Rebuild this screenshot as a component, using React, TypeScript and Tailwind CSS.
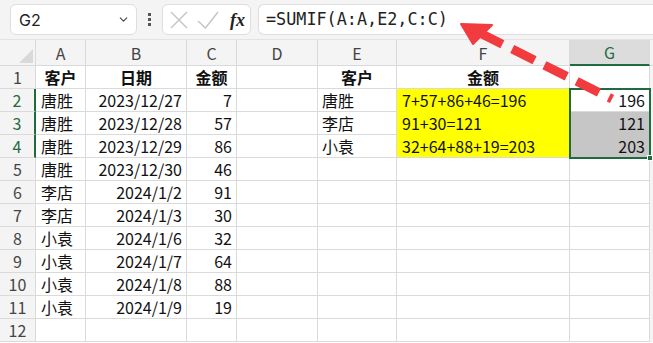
import React from "react";
import { ChevronDown } from "lucide-react";

const COLS = ["A", "B", "C", "D", "E", "F", "G"];
const WIDTHS = ["w-[50px]", "w-[101px]", "w-[50px]", "w-[81px]", "w-[79px]", "w-[173px]", "w-[80px]"];
const ALIGN = ["text-left pl-[5px]", "text-right pr-[4px]", "text-right pr-[4px]", "", "text-left pl-[4px]", "text-left pl-[5px]", "text-right pr-[4px]"];

const rows: string[][] = [
  ["客户", "日期", "金额", "", "客户", "金额", ""],
  ["唐胜", "2023/12/27", "7", "", "唐胜", "7+57+86+46=196", "196"],
  ["唐胜", "2023/12/28", "57", "", "李店", "91+30=121", "121"],
  ["唐胜", "2023/12/29", "86", "", "小袁", "32+64+88+19=203", "203"],
  ["唐胜", "2023/12/30", "46"],
  ["李店", "2024/1/2", "91"],
  ["李店", "2024/1/3", "30"],
  ["小袁", "2024/1/6", "32"],
  ["小袁", "2024/1/7", "64"],
  ["小袁", "2024/1/8", "88"],
  ["小袁", "2024/1/9", "19"],
  [],
];

// fundo de cada célula (amarelo na coluna F, cinza na seleção G3:G4)
function cellBg(r: number, c: number) {
  if (c === 5 && r >= 1 && r <= 3) return "bg-[#ffff00] border-r-[#ffff00]";
  if (c === 6 && (r === 2 || r === 3)) return "bg-[#c6c6c6]";
  return "bg-white";
}

function cellBorderB(r: number, c: number) {
  if (c === 5 && r >= 1 && r <= 2) return "border-b-[#ffff00]";
  if (c === 6 && r === 2) return "border-b-[#c6c6c6]";
  return "border-b-[#dadada]";
}

export default function App() {
  return (
    <div className="relative w-[653px] h-[343px] overflow-hidden bg-white font-['Noto_Sans_CJK_SC',sans-serif] text-[#111]">
      {/* Barra de fórmula */}
      <div className="h-[40px] bg-[#f4f4f4] flex items-start pt-[4px] pl-[10px] gap-0 border-b border-[#e3e3e3]">
        <div className="w-[127px] h-[31px] bg-white border border-[#dedede] rounded-[6px] flex items-center justify-between pl-[8px] pr-[6px]">
          <span className="text-[16px] text-[#222] font-['Inter',sans-serif]">G2</span>
          <ChevronDown className="w-[13px] h-[13px] text-[#444]" strokeWidth={2} />
        </div>
        <div className="w-[25px] h-[31px] flex flex-col items-center justify-center gap-[2px]">
          <span className="w-[3px] h-[3px] bg-[#555]" />
          <span className="w-[3px] h-[3px] bg-[#555]" />
          <span className="w-[3px] h-[3px] bg-[#555]" />
        </div>
        <div className="w-[89px] h-[31px] bg-white border border-[#dedede] rounded-[6px] flex items-center pl-[7px] gap-[9px]">
          <svg width="18" height="18" viewBox="0 0 18 18">
            <path d="M1 1 17 17M17 1 1 17" stroke="#c4c4c4" strokeWidth="1.4" fill="none" />
          </svg>
          <svg width="22" height="18" viewBox="0 0 22 18">
            <path d="M1 10 8.5 17 21 1" stroke="#c4c4c4" strokeWidth="1.4" fill="none" />
          </svg>
          <span className="font-['Liberation_Serif',serif] italic font-bold text-[18px] text-[#222] leading-none ml-[2px]">fx</span>
        </div>
        <div className="ml-[7px] flex-1 h-[31px] bg-white border border-[#dedede] rounded-l-[6px] border-r-0 flex items-center pl-[7px]">
          <span className="font-['DejaVu_Sans_Mono',monospace] text-[16.8px] text-[#222]">=SUMIF(A:A,E2,C:C)</span>
        </div>
      </div>

      {/* Cabeçalho de colunas */}
      <div className="flex h-[26px] bg-[#f4f4f4]">
        <div className="w-[36px] h-[26px] border-r border-b border-[#dadada] relative shrink-0">
          <svg className="absolute left-0 top-0" width="36" height="26">
            <polygon points="19,23 33,23 33,9" fill="#d9d9d9" />
          </svg>
        </div>
        {COLS.map((c, i) => (
          <div
            key={c}
            className={`${WIDTHS[i]} shrink-0 h-[26px] flex items-center justify-center text-[16px] border-r ${
              c === "G"
                ? "bg-[#dcdcdc] text-[#1e6b3f] border-b-2 border-b-[#1e6b3f] border-r-[#dadada]"
                : "text-[#444] border-b border-[#dadada]"
            }`}
          >
            {c}
          </div>
        ))}
        <div className="w-[3px] border-b border-[#dadada]" />
      </div>

      {/* Linhas */}
      {rows.map((row, r) => (
        <div key={r} className="flex h-[23px]">
          <div
            className={`w-[36px] shrink-0 h-[23px] flex items-center justify-center text-[16px] bg-[#f4f4f4] border-b border-[#dadada] ${
              r >= 1 && r <= 3
                ? "text-[#1e6b3f] border-r-2 border-r-[#1e6b3f] bg-[#e8e8e8]"
                : "text-[#444] border-r border-r-[#dadada]"
            }`}
          >
            {r + 1}
          </div>
          {COLS.map((_, c) => (
            <div
              key={c}
              className={`${WIDTHS[c]} shrink-0 h-[23px] border-r border-r-[#dadada] border-b ${cellBorderB(r, c)} ${cellBg(
                r,
                c
              )} flex items-center text-[16px] leading-none whitespace-nowrap ${
                r === 0 ? "justify-center font-bold" : ALIGN[c].startsWith("text-right") ? "justify-end " + ALIGN[c] : ALIGN[c]
              }`}
            >
              {row[c] ?? ""}
            </div>
          ))}
          <div className="w-[3px] bg-[#f4f4f4]" />
        </div>
      ))}

      {/* Seleção G2:G4 */}
      <div className="absolute left-[569px] top-[88px] w-[82px] h-[71px] border-2 border-[#1e6b3f] pointer-events-none" />
      <div className="absolute left-[647px] top-[155px] w-[6px] h-[6px] bg-[#1e6b3f] border border-white pointer-events-none" />

      {/* Seta vermelha tracejada */}
      <svg className="absolute left-0 top-0 pointer-events-none" width="653" height="343">
        <line x1="480" y1="33" x2="612" y2="99" stroke="#f23b3f" strokeWidth="9" strokeDasharray="25 11" />
        <polygon points="461,24 492,25 473,44" fill="#f23b3f" stroke="#f23b3f" strokeWidth="2" strokeLinejoin="round" />
      </svg>
    </div>
  );
}
